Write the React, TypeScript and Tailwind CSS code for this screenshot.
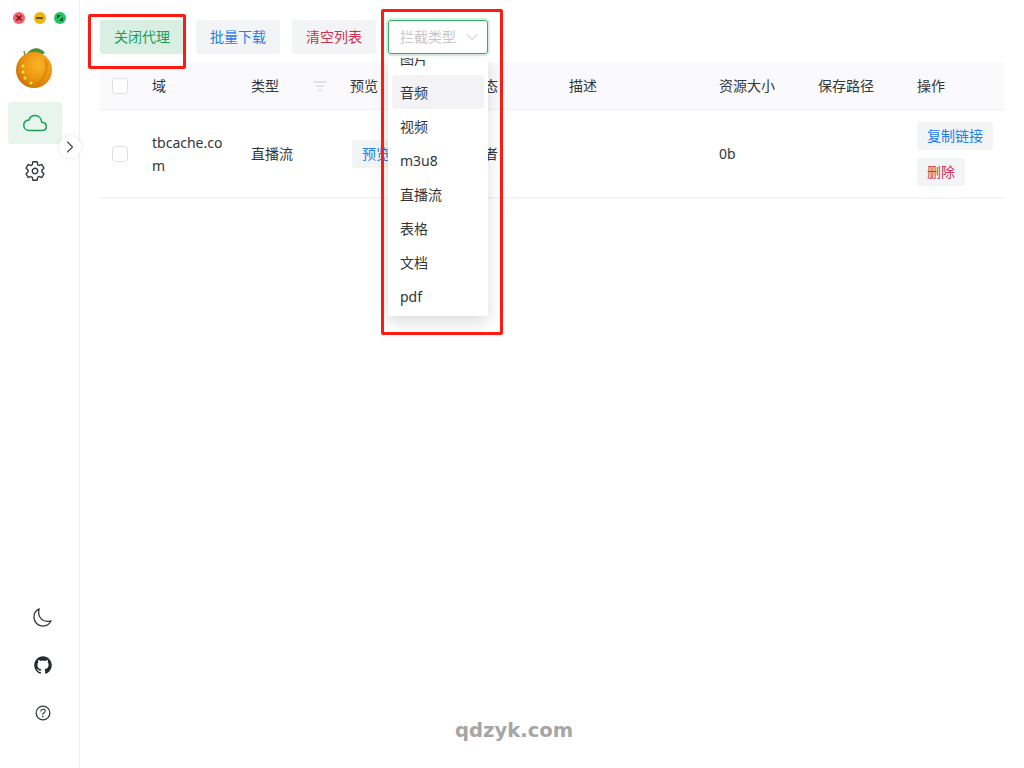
import React from "react";
import { ChevronRight, ChevronDown } from "lucide-react";
import { IoCloudOutline, IoSettingsOutline, IoMoonOutline, IoHelpCircleOutline, IoLogoGithub } from "react-icons/io5";

const font = "font-['Noto_Sans','Noto_Sans_CJK_SC',sans-serif]";

function Check() {
  return <div className="w-4 h-4 rounded-[3px] border border-[#e0e0e6] bg-white" />;
}

function Btn({ c, bg = "bg-[#f3f4f5]", children }: { c: string; bg?: string; children: React.ReactNode }) {
  return (
    <div className={`inline-flex h-[28px] items-center rounded-[3px] px-[10px] text-sm ${c} ${bg}`}>{children}</div>
  );
}

function TopBtn({ c, bg = "bg-[#f3f4f5]", children }: { c: string; bg?: string; children: React.ReactNode }) {
  return (
    <div className={`flex h-[34px] w-[84px] items-center justify-center rounded-[3px] text-sm ${c} ${bg}`}>{children}</div>
  );
}

function Logo() {
  return (
    <svg width="38" height="44" viewBox="0 0 38 44">
      <defs>
        <radialGradient id="o" cx="0.62" cy="0.36" r="0.72">
          <stop offset="0" stopColor="#f8b52a" />
          <stop offset="0.55" stopColor="#ee9612" />
          <stop offset="1" stopColor="#c86f08" />
        </radialGradient>
      </defs>
      <path d="M11 9 C15 2 24 -1 30 7 C25 10 17 10 11 9Z" fill="#4f8f3a" />
      <path d="M9 5 L10 10" stroke="#8a8a3c" strokeWidth="1.4" />
      <circle cx="19" cy="24" r="18" fill="url(#o)" />
      <path d="M30 14 C34 22 30 33 21 40" stroke="#d97a08" strokeWidth="3" fill="none" opacity="0.5" />
      {[[8, 20], [8, 26], [10, 32], [16, 37]].map(([x, y], i) => (
        <circle key={i} cx={x} cy={y} r="1.5" fill="#f7ea3c" />
      ))}
    </svg>
  );
}

const items = ["图片", "音频", "视频", "m3u8", "直播流", "表格", "文档", "pdf"];
const cols = "grid-cols-[40px_99px_99px_120px_99px_150px_99px_99px_99px]";

export default function App() {
  return (
    <div className={`relative flex h-screen w-full overflow-hidden bg-white text-[#333639] ${font}`}>
      <aside className="flex h-full w-20 shrink-0 flex-col border-r border-[#efeff5]">
        <div className="flex gap-[8.5px] pl-[13px] pt-3">
          <span className="flex h-3 w-3 items-center justify-center rounded-full bg-[#f75e66]">
            <svg width="8" height="8" viewBox="0 0 8 8" stroke="#6e1a1e" strokeWidth="1.6"><path d="M1.5 1.5L6.5 6.5M6.5 1.5L1.5 6.5" /></svg>
          </span>
          <span className="flex h-3 w-3 items-center justify-center rounded-full bg-[#eeb510]">
            <span className="h-[2px] w-[7px] bg-[#6e5406]" />
          </span>
          <span className="flex h-3 w-3 items-center justify-center rounded-full bg-[#22c463]">
            <svg width="8" height="8" viewBox="0 0 8 8" fill="#0f4f2a"><path d="M1 1H5L1 5ZM7 7H3L7 3Z" /></svg>
          </span>
        </div>
        <div className="ml-[15px] mt-[22px]"><Logo /></div>
        <div className="ml-2 mt-[12px] flex h-[42px] w-[54px] items-center justify-center rounded-[3px] bg-[#e7f5ee]">
          <IoCloudOutline size={24} className="text-[#18a058]" />
        </div>
        <div className="ml-[23px] mt-[15px] flex h-6 w-6 items-center justify-center">
          <IoSettingsOutline size={22} className="text-[#333639]" />
        </div>
        <div className="mt-auto flex flex-col items-center pb-[31px] pl-[6px]">
          <div className="flex h-12 items-center"><IoMoonOutline size={21} className="text-[#333639]" /></div>
          <div className="flex h-12 items-center"><IoLogoGithub size={20} className="text-[#24292e]" /></div>
          <div className="flex h-12 items-center"><IoHelpCircleOutline size={20} className="text-[#333639]" /></div>
        </div>
      </aside>

      <main className="flex-1 pl-5 pr-5 pt-5">
        <div className="flex gap-3">
          <TopBtn c="text-[#18a058]" bg="bg-[#d9efe3]">关闭代理</TopBtn>
          <TopBtn c="text-[#2080f0]">批量下载</TopBtn>
          <TopBtn c="text-[#d03050]">清空列表</TopBtn>
          <div className="flex h-[34px] w-[100px] items-center justify-between rounded-[3px] border border-[#36ad6a] pl-[11px] pr-[5px] text-sm text-[#c6c6c8] shadow-[0_0_0_2px_rgba(24,160,88,0.18)]">
            拦截类型
            <ChevronDown size={20} strokeWidth={1.1} className="shrink-0 text-[#b8b8bc]" />
          </div>
        </div>
        <div className={`mt-2 grid ${cols} h-[48px] items-center border-b border-[#efeff5] bg-[#fafafc] text-sm`}>
          <div className="pl-3"><Check /></div>
          <div className="pl-3">域</div>
          <div className="flex items-center justify-between pl-3 pr-[11px]">
            类型
            <svg width="14" height="10" viewBox="0 0 14 10" fill="none" stroke="#c8c8cc" strokeWidth="1.2">
              <path d="M0.5 1H13.5M3 5H11M5.5 9H8.5" />
            </svg>
          </div>
          <div className="pl-3">预览</div>
          <div className="pl-3">状态</div>
          <div className="pl-3">描述</div>
          <div className="pl-3">资源大小</div>
          <div className="pl-3">保存路径</div>
          <div className="pl-3">操作</div>
        </div>
        <div className={`grid ${cols} h-[89px] items-center border-b-2 border-[#f5f5f8] text-sm`}>
          <div className="pl-3"><Check /></div>
          <div className="break-all pl-3 pr-3 leading-[23px]">tbcache.com</div>
          <div className="pl-3">直播流</div>
          <div className="pl-[14px]"><Btn c="text-[#2080f0]">预览</Btn></div>
          <div className="pl-3">作者</div>
          <div />
          <div className="pl-3">0b</div>
          <div />
          <div className="flex flex-col items-start gap-2 pl-3">
            <Btn c="text-[#2080f0]">复制链接</Btn>
            <Btn c="text-[#d03050]">删除</Btn>
          </div>
        </div>
      </main>

      {/* collapse toggle */}
      <div className="absolute left-[59px] top-[136px] flex h-[22px] w-[22px] items-center justify-center rounded-full bg-white shadow-[0_0_5px_rgba(0,0,0,0.1)]">
        <ChevronRight size={20} strokeWidth={1.3} className="text-[#4a4a4e]" />
      </div>

      {/* dropdown */}
      <div className="absolute left-[388px] top-[58px] h-[258px] w-[100px] overflow-hidden rounded-[3px] bg-white text-sm shadow-[0_6px_16px_rgba(0,0,0,0.14)]">
        <div className="-mt-[17px] px-1">
          {items.map((t) => (
            <div key={t} className={`flex h-[34px] items-center rounded-[3px] px-2 pt-[2px] ${t === "音频" ? "bg-[#f3f3f5]" : ""}`}>{t}</div>
          ))}
        </div>
      </div>

      {/* annotation frames */}
      <div className="absolute left-[88px] top-[14px] h-[55px] w-[98px] rounded-[2px] border-[3px] border-[#ff1a12]" />
      <div className="absolute left-[381px] top-[9px] h-[326px] w-[122px] rounded-[2px] border-[3px] border-[#ff1a12]" />

      {/* watermark */}
      <div className="absolute left-[455px] top-[717px] font-['DejaVu_Sans',sans-serif] text-[19.6px] font-bold leading-[28px] text-[#a6a6a6]">qdzyk.com</div>
    </div>
  );
}
